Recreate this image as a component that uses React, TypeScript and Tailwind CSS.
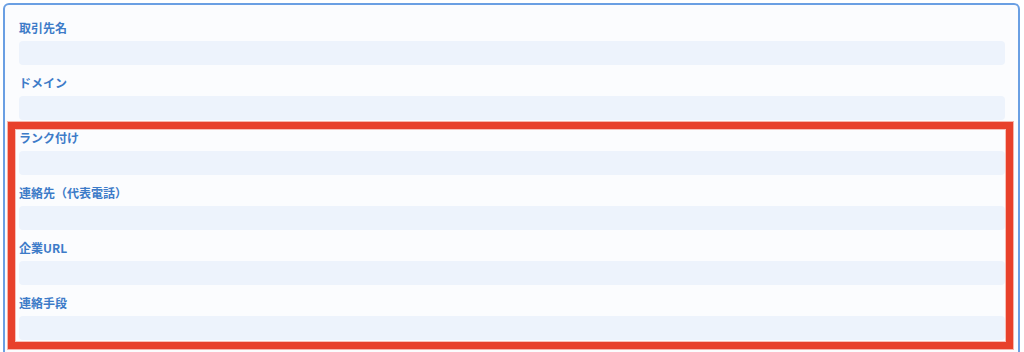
import React from "react";

const fields = ["取引先名", "ドメイン", "ランク付け", "連絡先（代表電話）", "企業URL", "連絡手段"];

export default function App() {
  return (
    <div
      className="relative w-[1024px] h-[352px] overflow-hidden bg-white"
      style={{ fontFamily: '"Noto Sans CJK JP", "Noto Sans", sans-serif' }}
    >
      <div className="ml-[3px] mt-[3px] w-[1017px] h-[400px] rounded-[6px] border-2 border-[#6a9fe3] bg-[#fbfcfe] pt-[14px] pl-[14px] pr-[13px] flex flex-col gap-[9px]">
        {fields.map((f) => (
          <div key={f} className="flex flex-col">
            <div className="h-[18px] leading-[18px] text-[12px] font-bold text-[#3d7bc8] mb-[4px]">{f}</div>
            <div className="h-[24px] rounded-[4px] bg-[#edf3fc]" />
          </div>
        ))}
      </div>
      <div className="absolute left-[8px] top-[122px] w-[1005px] h-[227px] border-[7px] border-[#e8412b] shadow-[inset_0_0_0_1px_#f7c0b8,0_0_0_1px_#f5b5ab]" />
    </div>
  );
}
